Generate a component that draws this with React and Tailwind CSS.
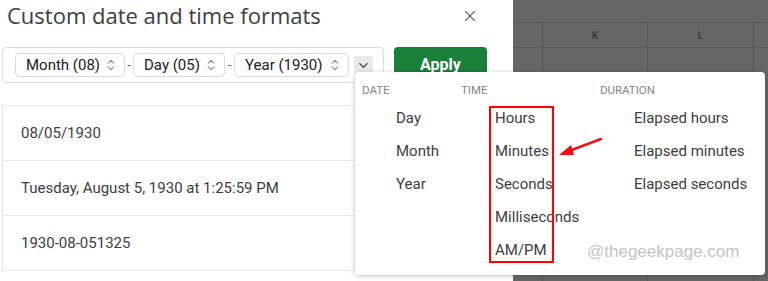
import { X, ChevronDown, ChevronsUpDown } from 'lucide-react'

const rows = ['08/05/1930', 'Tuesday, August 5, 1930 at 1:25:59 PM', '1930-08-051325']

const cols = [
  { title: 'DATE', items: ['Day', 'Month', 'Year'] },
  { title: 'TIME', items: ['Hours', 'Minutes', 'Seconds', 'Milliseconds', 'AM/PM'] },
  { title: 'DURATION', items: ['Elapsed hours', 'Elapsed minutes', 'Elapsed seconds'] },
]

function Chip({ label, width }) {
  return (
    <div className={`flex h-6 items-center justify-between rounded border border-[#dadce0] bg-white pl-[10px] pr-[6px] text-[15px] text-[#202124] ${width}`}>
      <span>{label}</span>
      <ChevronsUpDown size={14} strokeWidth={1.8} className="text-[#80868b]" />
    </div>
  )
}

function Sheet() {
  // spreadsheet behind the dimmed overlay
  return (
    <div className="flex h-[281px] flex-1 flex-col bg-[#666666]">
      <div className="h-[23px] border-b border-[#585858]" />
      <div className="grid h-[25px] grid-cols-[30px_105px_106px_1fr] border-b border-[#585858] text-[10px] font-bold text-[#3d3d3d]">
        <div className="border-r border-[#585858]" />
        <div className="flex items-center justify-center border-r border-[#585858]">K</div>
        <div className="flex items-center justify-center border-r border-[#585858]">L</div>
        <div />
      </div>
      <div className="grid flex-1 grid-cols-[30px_105px_106px_1fr]">
        <div className="border-r border-[#585858]" />
        <div className="border-r border-[#585858]" />
        <div className="border-r border-[#585858]" />
        <div />
      </div>
    </div>
  )
}

export default function App() {
  return (
    <div className="relative flex h-[281px] w-[768px] overflow-hidden bg-white font-['Roboto',sans-serif]">
      <div className="flex w-[513px] flex-col bg-white">
        <div className="flex h-[31px] items-center justify-between pl-[7px] pr-[34px]">
          <h1 className="font-['Open_Sans',sans-serif] text-[22px] font-normal text-[#3c4043]">Custom date and time formats</h1>
          <X size={18} strokeWidth={1.5} className="text-[#5f6368]" />
        </div>

        <div className="mt-[16px] flex items-start pl-[2px]">
          <div className="flex h-[36px] w-[382px] items-center rounded border border-[#dadce0] pl-[12px]">
            <Chip label="Month (08)" width="w-[110px]" />
            <span className="w-[8px] text-center text-[13px] text-[#5f6368]">-</span>
            <Chip label="Day (05)" width="w-[92px]" />
            <span className="w-[9px] text-center text-[13px] text-[#5f6368]">-</span>
            <Chip label="Year (1930)" width="w-[115px]" />
            <div className="ml-[5px] flex h-[18px] w-[19px] items-center justify-center bg-[#e8eaed]">
              <ChevronDown size={15} strokeWidth={2.2} className="text-[#3c4043]" />
            </div>
          </div>
          <button className="ml-[10px] h-[36px] w-[93px] rounded bg-[#188038] text-[16px] font-bold text-white">Apply</button>
        </div>

        <div className="mt-[22px] ml-[2px] border-l border-[#e8eaed]">
          {rows.map(r => (
            <div key={r} className="flex h-[55px] items-center border-t border-[#e8eaed] pl-[18px] text-[15px] text-[#3c4043]">
              {r}
            </div>
          ))}
          <div className="border-t border-[#e8eaed]" />
        </div>
      </div>

      <Sheet />

      <div className="absolute left-[355px] top-[72px] h-[203px] w-[410px] rounded bg-white px-[7px] shadow-[0_1px_5px_rgba(0,0,0,0.25)]">
        <div className="grid grid-cols-[99px_139px_1fr]">
          {cols.map(c => (
            <div key={c.title} className="flex flex-col">
              <div className="mt-[10px] h-[16px] text-[11.5px] leading-[16px] text-[#80868b]">{c.title}</div>
              <div className="flex flex-col pt-[4px] pl-[34px]">
                {c.items.map(i => (
                  <div key={i} className="h-[33px] text-[15px] leading-[33px] text-[#3c4043]">{i}</div>
                ))}
              </div>
            </div>
          ))}
        </div>
      </div>

      <div className="absolute left-[489px] top-[106px] h-[157px] w-[65px] border-2 border-[#ff0000]" />

      <svg className="absolute left-[555px] top-[135px]" width="50" height="26" viewBox="0 0 50 26">
        <line x1="46" y1="4" x2="14" y2="16" stroke="#ee1111" strokeWidth="2.5" strokeLinecap="round" />
        <polygon points="4,20 16,10 19,20" fill="#ee1111" />
      </svg>

      <div className="absolute left-[587px] top-[239px] font-['Liberation_Sans',sans-serif] text-[17px] text-[#c4c4c4]">@thegeekpage.com</div>
    </div>
  )
}
